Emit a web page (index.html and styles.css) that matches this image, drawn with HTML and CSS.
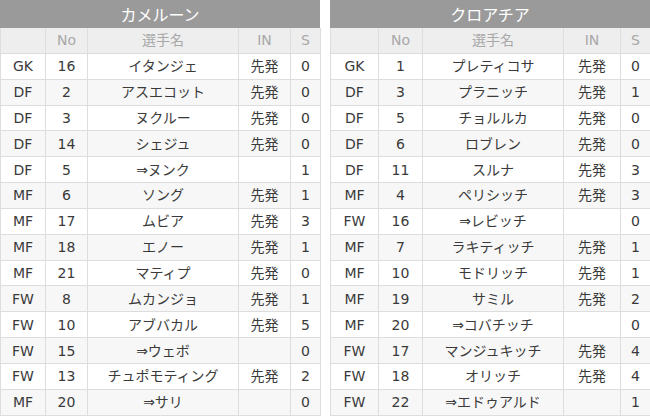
FILE: index.html
```html
<!DOCTYPE html>
<html lang="ja">
<head>
<meta charset="utf-8">
<link rel="stylesheet" href="styles.css">
</head>
<body>
<div class="wrap">
  <section class="team team-left">
    <div class="title">カメルーン</div>
    <table class="roster">
      <colgroup><col class="c-pos"><col class="c-no"><col class="c-name"><col class="c-in"><col class="c-s"></colgroup>
      <thead><tr><th></th><th>No</th><th>選手名</th><th>IN</th><th>S</th></tr></thead>
      <tbody>
        <tr><td>GK</td><td>16</td><td>イタンジェ</td><td>先発</td><td>0</td></tr>
        <tr><td>DF</td><td>2</td><td>アスエコット</td><td>先発</td><td>0</td></tr>
        <tr><td>DF</td><td>3</td><td>ヌクルー</td><td>先発</td><td>0</td></tr>
        <tr><td>DF</td><td>14</td><td>シェジュ</td><td>先発</td><td>0</td></tr>
        <tr><td>DF</td><td>5</td><td>⇒ヌンク</td><td></td><td>1</td></tr>
        <tr><td>MF</td><td>6</td><td>ソング</td><td>先発</td><td>1</td></tr>
        <tr><td>MF</td><td>17</td><td>ムビア</td><td>先発</td><td>3</td></tr>
        <tr><td>MF</td><td>18</td><td>エノー</td><td>先発</td><td>1</td></tr>
        <tr><td>MF</td><td>21</td><td>マティプ</td><td>先発</td><td>0</td></tr>
        <tr><td>FW</td><td>8</td><td>ムカンジョ</td><td>先発</td><td>1</td></tr>
        <tr><td>FW</td><td>10</td><td>アブバカル</td><td>先発</td><td>5</td></tr>
        <tr><td>FW</td><td>15</td><td>⇒ウェボ</td><td></td><td>0</td></tr>
        <tr><td>FW</td><td>13</td><td>チュポモティング</td><td>先発</td><td>2</td></tr>
        <tr><td>MF</td><td>20</td><td>⇒サリ</td><td></td><td>0</td></tr>
      </tbody>
    </table>
  </section>
  <section class="team team-right">
    <div class="title">クロアチア</div>
    <table class="roster">
      <colgroup><col class="r-pos"><col class="r-no"><col class="r-name"><col class="r-in"><col class="r-s"></colgroup>
      <thead><tr><th></th><th>No</th><th>選手名</th><th>IN</th><th>S</th></tr></thead>
      <tbody>
        <tr><td>GK</td><td>1</td><td>プレティコサ</td><td>先発</td><td>0</td></tr>
        <tr><td>DF</td><td>3</td><td>プラニッチ</td><td>先発</td><td>1</td></tr>
        <tr><td>DF</td><td>5</td><td>チョルルカ</td><td>先発</td><td>0</td></tr>
        <tr><td>DF</td><td>6</td><td>ロブレン</td><td>先発</td><td>0</td></tr>
        <tr><td>DF</td><td>11</td><td>スルナ</td><td>先発</td><td>3</td></tr>
        <tr><td>MF</td><td>4</td><td>ペリシッチ</td><td>先発</td><td>3</td></tr>
        <tr><td>FW</td><td>16</td><td>⇒レビッチ</td><td></td><td>0</td></tr>
        <tr><td>MF</td><td>7</td><td>ラキティッチ</td><td>先発</td><td>1</td></tr>
        <tr><td>MF</td><td>10</td><td>モドリッチ</td><td>先発</td><td>1</td></tr>
        <tr><td>MF</td><td>19</td><td>サミル</td><td>先発</td><td>2</td></tr>
        <tr><td>MF</td><td>20</td><td>⇒コバチッチ</td><td></td><td>0</td></tr>
        <tr><td>FW</td><td>17</td><td>マンジュキッチ</td><td>先発</td><td>4</td></tr>
        <tr><td>FW</td><td>18</td><td>オリッチ</td><td>先発</td><td>4</td></tr>
        <tr><td>FW</td><td>22</td><td>⇒エドゥアルド</td><td></td><td>1</td></tr>
      </tbody>
    </table>
  </section>
</div>
</body>
</html>
```
FILE: styles.css
```css
html, body {
  margin: 0;
  padding: 0;
  background: #ffffff;
}
body {
  font-family: "DejaVu Sans", "Noto Sans CJK JP", sans-serif;
  font-size: 14px;
  color: #3a3a3a;
}
.wrap {
  display: flex;
  gap: 10px;
  width: 650px;
}
.team {
  width: 320px;
  flex: 0 0 320px;
}
.title {
  height: 28px;
  line-height: 28px;
  background: #9a9a9a;
  color: #ffffff;
  text-align: center;
  font-family: "Noto Sans CJK JP", sans-serif;
  font-size: 16px;
}
.roster {
  width: 320px;
  border-collapse: collapse;
  table-layout: fixed;
}
.roster th,
.roster td {
  border: 1px solid #dddddd;
  height: 24.85px;
  padding: 0;
  text-align: center;
  vertical-align: middle;
  white-space: nowrap;
  line-height: 22px;
}
.roster thead th {
  background: #eeeeee;
  color: #a8a8a8;
  font-weight: normal;
  border-top: none;
}
.roster tbody tr:nth-child(even) td {
  background: #f7f7f7;
}
.roster tbody tr:nth-child(odd) td {
  background: #ffffff;
}
.c-pos { width: 45px; }
.c-no { width: 42px; }
.c-name { width: 151px; }
.c-in { width: 52px; }
.c-s { width: 30px; }
.r-pos { width: 48px; }
.r-no { width: 44px; }
.r-name { width: 141px; }
.r-in { width: 57px; }
.r-s { width: 30px; }
```
